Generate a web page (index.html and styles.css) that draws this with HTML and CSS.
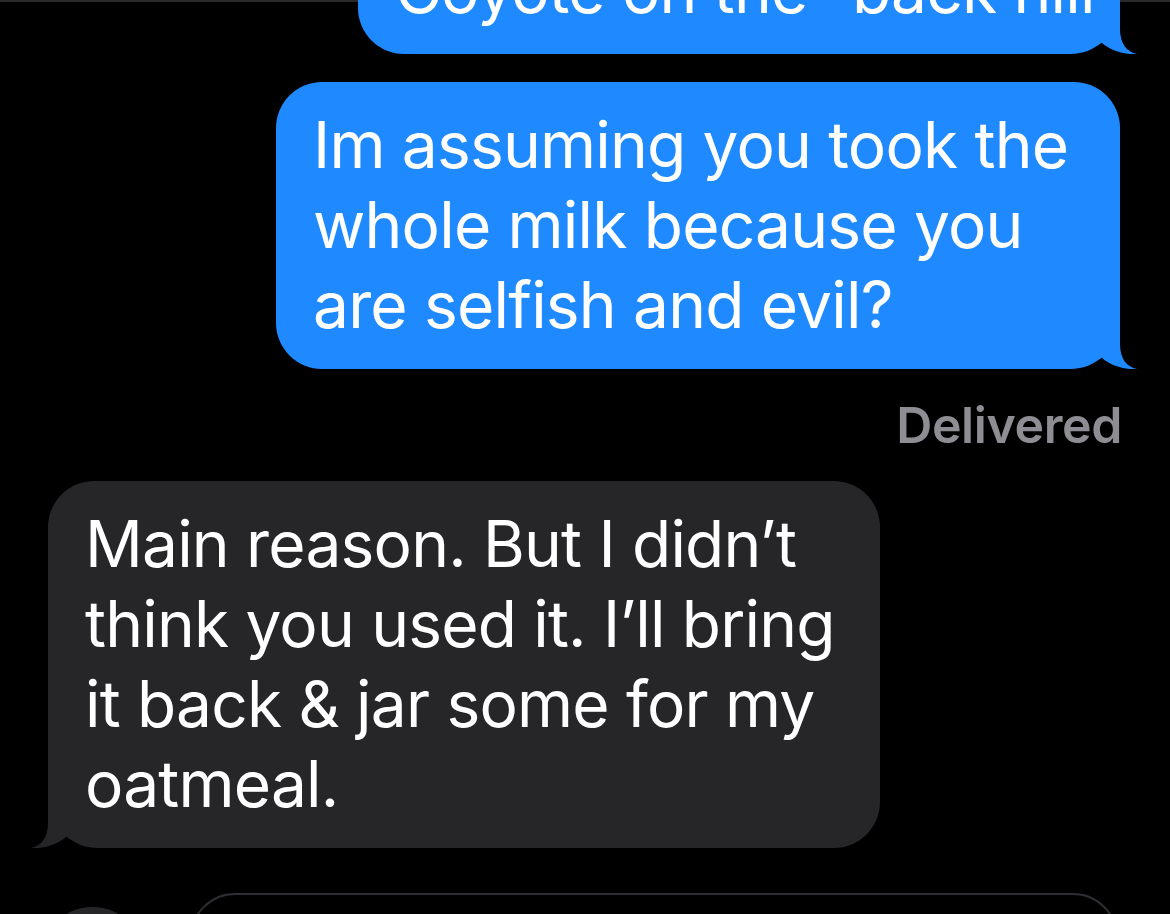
FILE: index.html
```html
<!DOCTYPE html>
<html lang="en">
<head>
<meta charset="utf-8">
<title>Messages</title>
<link rel="stylesheet" href="styles.css">
</head>
<body>
<div class="screen">
  <div class="thread">
    <div class="row row-out">
      <div class="bubble bubble-out bubble-first">
        <p class="text">Coyote on the “back hill</p>
        <svg class="tail tail-out" viewBox="0 0 60 50" aria-hidden="true"><path d="M43 0 L43 25 C43 40 50 48 60 50 C47 51 32 46 24 38 L12 20 L32 0 Z"/></svg>
      </div>
    </div>
    <div class="row row-out">
      <div class="bubble bubble-out bubble-milk">
        <p class="text">Im assuming you took the<br>whole milk because you<br>are selfish and evil?</p>
        <svg class="tail tail-out" viewBox="0 0 60 50" aria-hidden="true"><path d="M43 0 L43 25 C43 40 50 48 60 50 C47 51 32 46 24 38 L12 20 L32 0 Z"/></svg>
      </div>
    </div>
    <div class="status">Delivered</div>
    <div class="row row-in">
      <div class="bubble bubble-in bubble-reply">
        <p class="text">Main reason. But I didn’t<br>think you used it. I’ll bring<br>it back &amp; jar some for my<br>oatmeal.</p>
        <svg class="tail tail-in" viewBox="0 0 60 50" aria-hidden="true"><path d="M17 0 L17 25 C17 40 10 48 0 50 C13 51 28 46 36 38 L48 20 L28 0 Z"/></svg>
      </div>
    </div>
  </div>
  <div class="composer">
    <div class="plus"></div>
    <div class="field"></div>
  </div>
</div>
</body>
</html>
```
FILE: styles.css
```css
html, body {
  margin: 0;
  padding: 0;
  background: #000;
}

body {
  width: 1170px;
  height: 914px;
  overflow: hidden;
  font-family: Inter, "Noto Sans", "Liberation Sans", sans-serif;
  color: #fff;
}

.screen {
  position: relative;
  width: 1170px;
  height: 914px;
  overflow: hidden;
}

.screen::before {
  content: "";
  position: absolute;
  left: 0;
  top: 0;
  width: 100%;
  height: 2px;
  background: #2a2a2c;
}

.thread {
  display: flex;
  flex-direction: column;
  margin-top: -73px;
}

.row {
  display: flex;
}

.row-out {
  justify-content: flex-end;
  padding-right: 50px;
}

.row-in {
  justify-content: flex-start;
  padding-left: 48px;
}

.row + .row {
  margin-top: 28px;
}

.bubble {
  position: relative;
  box-sizing: border-box;
  padding: 23px 40px 24px 37px;
  border-radius: 46px;
}

.bubble-out {
  background: #1f8aff;
  border-bottom-right-radius: 50px;
}

.bubble-in {
  background: #262629;
  border-bottom-left-radius: 50px;
}

.bubble-first { width: 762px; }
.bubble-milk { width: 844px; }
.bubble-reply { width: 832px; }

.text {
  margin: 0;
  font-size: 64px;
  line-height: 80px;
  font-weight: 400;
  letter-spacing: -0.8px;
  white-space: nowrap;
}

.tail {
  position: absolute;
  bottom: 0;
  width: 60px;
  height: 50px;
}

.tail-out {
  right: -17px;
  fill: #1f8aff;
}

.tail-in {
  left: -17px;
  fill: #262629;
}

.status {
  align-self: flex-end;
  margin: 26px 48px 26px 0;
  font-size: 50px;
  line-height: 60px;
  font-weight: 600;
  color: #8d8d93;
  letter-spacing: -0.4px;
}

.composer {
  display: flex;
  align-items: flex-start;
  margin-top: 45px;
  padding-left: 40px;
  gap: 45px;
}

.plus {
  flex: none;
  width: 105px;
  height: 105px;
  margin-top: 14px;
  border-radius: 50%;
  background: #262628;
}

.field {
  flex: none;
  width: 928px;
  height: 110px;
  box-sizing: border-box;
  border: 2px solid #2e2f32;
  border-radius: 45px;
}
```
